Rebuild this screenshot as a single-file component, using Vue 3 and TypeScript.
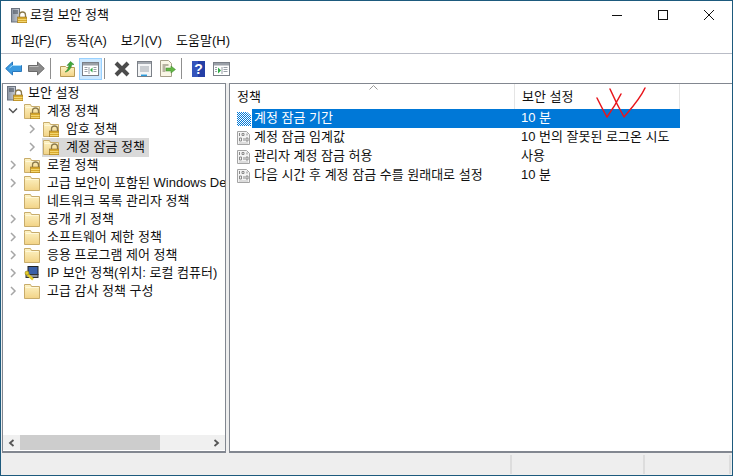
<script setup lang="ts">
interface TreeRow { label: string; indent: number; arrow: '' | 'open' | 'closed'; icon: string; selected?: boolean }
const menus = ['파일(F)', '동작(A)', '보기(V)', '도움말(H)']
const tree: TreeRow[] = [
  { label: '보안 설정', indent: 0, arrow: '', icon: 'server' },
  { label: '계정 정책', indent: 1, arrow: 'open', icon: 'lockfolder' },
  { label: '암호 정책', indent: 2, arrow: 'closed', icon: 'lockfolder' },
  { label: '계정 잠금 정책', indent: 2, arrow: 'closed', icon: 'lockfolder', selected: true },
  { label: '로컬 정책', indent: 1, arrow: 'closed', icon: 'lockfolder' },
  { label: '고급 보안이 포함된 Windows Defender 방화벽', indent: 1, arrow: 'closed', icon: 'folder' },
  { label: '네트워크 목록 관리자 정책', indent: 1, arrow: '', icon: 'folder' },
  { label: '공개 키 정책', indent: 1, arrow: 'closed', icon: 'folder' },
  { label: '소프트웨어 제한 정책', indent: 1, arrow: 'closed', icon: 'folder' },
  { label: '응용 프로그램 제어 정책', indent: 1, arrow: 'closed', icon: 'folder' },
  { label: 'IP 보안 정책(위치: 로컬 컴퓨터)', indent: 1, arrow: 'closed', icon: 'ipsec' },
  { label: '고급 감사 정책 구성', indent: 1, arrow: 'closed', icon: 'folder' },
]
const policies = [
  { name: '계정 잠금 기간', value: '10 분', selected: true },
  { name: '계정 잠금 임계값', value: '10 번의 잘못된 로그온 시도' },
  { name: '관리자 계정 잠금 허용', value: '사용' },
  { name: '다음 시간 후 계정 잠금 수를 원래대로 설정', value: '10 분' },
]
</script>

<template>
  <div class="window">
    <svg class="defs" width="0" height="0">
      <defs>
        <linearGradient id="fold" x1="0" y1="0" x2="0" y2="1">
          <stop offset="0" stop-color="#fdf3c6" />
          <stop offset="1" stop-color="#f2d386" />
        </linearGradient>
        <linearGradient id="tower" x1="0" y1="0" x2="1" y2="0">
          <stop offset="0" stop-color="#8d96a3" />
          <stop offset="1" stop-color="#c9ced6" />
        </linearGradient>
        <symbol id="folder" viewBox="0 0 16 16">
          <path d="M.5 3.500V1.500h6l1 2h8v12H.5z" fill="url(#fold)" stroke="#c8ac6b" />
          <path d="M1.500 4.500h13" stroke="#fff8d8" />
        </symbol>
        <symbol id="lock" viewBox="0 0 16 16">
          <path d="M8.500 10V8a3 3 0 0 1 6 0v2" fill="none" stroke="#8b7a4d" stroke-width="1.300" />
          <rect x="6.500" y="10" width="9.500" height="6" fill="#d8a92c" stroke="#94722a" stroke-width=".6" />
          <path d="M7 12.500h8.500M7 14.500h8.500" stroke="#f3d670" />
        </symbol>
        <symbol id="lockfolder" viewBox="0 0 16 16">
          <use href="#folder" width="16" height="16" />
          <use href="#lock" width="16" height="16" />
        </symbol>
        <symbol id="server" viewBox="0 0 16 16">
          <rect x=".5" y="1.500" width="8" height="13.500" fill="url(#tower)" stroke="#6d7480" />
          <path d="M2 4h5M2 6h5" stroke="#3f4752" />
          <use href="#lock" width="16" height="16" />
        </symbol>
        <symbol id="ipsec" viewBox="0 0 16 16">
          <rect x="4" y="1.500" width="10" height="8" fill="#3a5fa8" stroke="#222" />
          <rect x="2" y="9.500" width="12" height="3" fill="#8d929a" stroke="#333" />
          <path d="M2 8l7 6.500" stroke="#e4cc2a" stroke-width="2.400" />
          <circle cx="3" cy="8" r="2" fill="#e4cc2a" stroke="#7c6e12" stroke-width=".5" />
        </symbol>
        <symbol id="policy" viewBox="0 0 16 16">
          <path d="M1.500 1.500h9l3 3v10h-12z" fill="#f4f4f4" stroke="#a4a4a4" />
          <path d="M3.500 3v3M6 3.500h2v2H6zM3.500 8h2v3h-2zM8 8v3M10 8h2v3h-2zM11 3.500v2" fill="none" stroke="#8a8a8a" />
          <path d="M3 13h9" stroke="#c4c4c4" />
        </symbol>
        <pattern id="dither" width="2" height="2" patternUnits="userSpaceOnUse">
          <rect width="2" height="2" fill="#fff" />
          <rect width="1" height="1" fill="#0078d7" />
          <rect x="1" y="1" width="1" height="1" fill="#0078d7" />
        </pattern>
        <symbol id="policy-sel" viewBox="0 0 16 16">
          <path d="M1 1h10l4 3.500V15H1z" fill="url(#dither)" />
        </symbol>
      </defs>
    </svg>

    <header class="titlebar">
      <svg class="title-icon" width="16" height="16"><use href="#server" width="16" height="16" /></svg>
      <span class="title-text">로컬 보안 정책</span>
      <div class="caption">
        <span class="cap-btn"><i class="min"></i></span>
        <span class="cap-btn"><i class="max"></i></span>
        <span class="cap-btn">
          <svg width="10" height="10" viewBox="0 0 10 10"><path d="M0 0l10 10M10 0L0 10" stroke="#111" fill="none" /></svg>
        </span>
      </div>
    </header>

    <nav class="menubar">
      <span v-for="m in menus" :key="m" class="menu">{{ m }}</span>
    </nav>

    <div class="toolbar">
      <span class="tool">
        <svg width="17" height="15" viewBox="0 0 17 15"><path d="M.7 7.500L7.500 1v3.500h9v6h-9V14z" fill="#3a9ae0" stroke="#2a78bd" stroke-linejoin="round" /><path d="M4.500 7l3-2.500h8.500" stroke="#a5dcfa" fill="none" /></svg>
      </span>
      <span class="tool">
        <svg width="17" height="15" viewBox="0 0 17 15"><path d="M16.300 7.500L9.500 1v3.500h-9v6h9V14z" fill="#8c8c8c" stroke="#6a6a6a" stroke-linejoin="round" /><path d="M1.500 5.500h9" stroke="#bcbcbc" /></svg>
      </span>
      <i class="sep"></i>
      <span class="tool">
        <svg width="15" height="16" viewBox="0 0 15 16"><path d="M.5 5.500h5l1 1h8v9H.5z" fill="url(#fold)" stroke="#b89a55" /><path d="M5 11C7.500 9.500 8.500 6.500 9 4L7 4.500 10.500.5 14 3.500l-2.200.1C11.300 7 8.500 11 5 11z" fill="#3fa83a" stroke="#2a7c26" stroke-width=".5" /></svg>
      </span>
      <span class="tool active">
        <svg width="17" height="14" viewBox="0 0 17 14"><rect x=".5" y=".5" width="16" height="13" fill="#fff" stroke="#7a7f87" /><rect x="1" y="1" width="15" height="2.500" fill="#9aa0a8" /><path d="M2.500 5.500h3M2.500 7.500h3M2.500 9.500h3M11.500 5.500h3M11.500 7.500h3M11.500 9.500h3M7 5v7" stroke="#9aa0a8" /><path d="M10.500 5.500v5l-2.500-2.500z" fill="#2eaa44" /></svg>
      </span>
      <i class="sep"></i>
      <span class="tool">
        <svg width="16" height="16" viewBox="0 0 16 16"><path d="M2 2l12 12M14 2L2 14" stroke="#4c4c4c" stroke-width="4" /></svg>
      </span>
      <span class="tool">
        <svg width="15" height="16" viewBox="0 0 15 16"><rect x=".5" y=".5" width="14" height="15" fill="#f4f5f6" stroke="#7b8087" /><rect x="1" y="1" width="13" height="2" fill="#a4a9b0" /><path d="M3 6h9M3 8h9M3 10h9" stroke="#9fa5ac" /><path d="M4 14.300h6" stroke="#2b9bdc" stroke-width="1.500" /></svg>
      </span>
      <span class="tool">
        <svg width="17" height="17" viewBox="0 0 17 17"><path d="M1.500.5h8l3 3v13h-11z" fill="#faf6e6" stroke="#a7a08a" /><path d="M3.500 5h6M3.500 7h3M3.500 9h3M3.500 11h3" stroke="#77705c" /><path d="M7 8h5V6l4.500 3.500L12 13v-2H7z" fill="#63b544" stroke="#3f8a2c" stroke-width=".5" /></svg>
      </span>
      <i class="sep"></i>
      <span class="tool">
        <svg width="13" height="16" viewBox="0 0 13 16"><rect width="13" height="16" fill="#243fa6" /><rect width="6" height="16" fill="#3f62c9" opacity=".6" /><text x="6.500" y="13" text-anchor="middle" font-size="14" font-weight="700" font-family="Liberation Sans" fill="#fff">?</text></svg>
      </span>
      <span class="tool">
        <svg width="17" height="14" viewBox="0 0 17 14"><rect x=".5" y=".5" width="16" height="13" fill="#fff" stroke="#7a7f87" /><rect x="1" y="1" width="15" height="2.500" fill="#9aa0a8" /><path d="M2 5.500h2M2 7.500h2M2 9.500h2M10.500 5.500h4M10.500 7.500h4M10.500 9.500h4M9 5v7" stroke="#9aa0a8" /><path d="M5 5.500v6l3-3z" fill="#2eaa44" /></svg>
      </span>
    </div>

    <main class="panes">
      <section class="tree-pane">
        <div class="tree-scroll">
          <div v-for="r in tree" :key="r.label" class="tree-row" :class="'lvl' + r.indent">
            <span class="arrow">
              <svg v-if="r.arrow === 'open'" width="10" height="8" viewBox="0 0 10 8"><path d="M1 1.500l4 4 4-4" fill="none" stroke="#555" stroke-width="1.500" /></svg>
              <svg v-else-if="r.arrow === 'closed'" width="7" height="10" viewBox="0 0 7 10"><path d="M1 1l4 4-4 4" fill="none" stroke="#a6a6a6" stroke-width="1.500" /></svg>
            </span>
            <span class="tree-item" :class="{ sel: r.selected }">
              <svg class="row-icon" width="16" height="16"><use :href="'#' + r.icon" width="16" height="16" /></svg>
              <span class="tree-label">{{ r.label }}</span>
            </span>
          </div>
        </div>
        <div class="hscroll">
          <span class="sb-btn"><svg width="7" height="8" viewBox="0 0 7 8"><path d="M5.500 1L2 4l3.500 3" fill="none" stroke="#555" stroke-width="1.800" /></svg></span>
          <div class="sb-track"><div class="sb-thumb"></div></div>
          <span class="sb-btn"><svg width="7" height="8" viewBox="0 0 7 8"><path d="M1.500 1L5 4 1.500 7" fill="none" stroke="#555" stroke-width="1.800" /></svg></span>
        </div>
      </section>

      <section class="list-pane">
        <div class="list-head">
          <div class="col col-name">정책<svg class="sort" width="9" height="5" viewBox="0 0 9 5"><path d="M.5 4.500l4-4 4 4" fill="none" stroke="#999" /></svg></div>
          <div class="col col-val">보안 설정</div>
        </div>
        <div v-for="p in policies" :key="p.name" class="list-row">
          <svg class="row-icon" width="16" height="16"><use :href="p.selected ? '#policy-sel' : '#policy'" width="16" height="16" /></svg>
          <div class="list-cells" :class="{ sel: p.selected }">
            <span class="cell-name">{{ p.name }}</span>
            <span class="cell-val">{{ p.value }}</span>
          </div>
        </div>
        <svg class="scribble" width="60" height="40" viewBox="0 0 60 40"><path d="M5 14C8 20 12 28 15 33 20 26 25 18 29 10M18 5C22 14 28 26 32 33 38 26 48 15 53 4" fill="none" stroke="#e8161c" stroke-width="1.500" stroke-linecap="round" stroke-linejoin="round" /></svg>
      </section>
    </main>

    <footer class="status">
      <span class="st st1"></span><span class="st st2"></span><span class="st st3"></span>
    </footer>
  </div>
</template>

<style>
html, body { margin: 0; background: #fff; overflow: hidden; }
</style>

<style scoped>
.window {
  box-sizing: border-box;
  width: 733px;
  height: 476px;
  display: flex;
  flex-direction: column;
  border: 1px solid #1d5a7d;
  background: #fff;
  font: 13px "Liberation Sans", "Noto Sans CJK KR", sans-serif;
  color: #111;
  overflow: hidden;
}
.defs { position: absolute; }
.titlebar { height: 29px; box-sizing: border-box; padding-bottom: 1px; display: flex; align-items: center; flex: none; }
.title-icon { margin-left: 10px; }
.title-text { margin-left: 3px; line-height: 18px; }
.caption { margin-left: auto; display: flex; }
.cap-btn { width: 46px; height: 28px; display: flex; align-items: center; justify-content: center; }
.min { width: 10px; height: 1px; background: #111; }
.max { width: 8px; height: 8px; border: 1px solid #111; }
.menubar { height: 24px; box-sizing: border-box; flex: none; display: flex; align-items: center; padding: 0 0 1px 3px; border-bottom: 1px solid #b9bcc6; }
.menu { padding: 0 7px; line-height: 18px; }
.toolbar { height: 29px; flex: none; display: flex; align-items: center; padding-left: 1px; background: #fff; }
.tool { width: 23px; height: 22px; display: flex; align-items: center; justify-content: center; }
.active { background: #cce8ff; box-shadow: inset 0 0 0 1px #99d1ff; }
.sep { width: 1px; height: 21px; background: #8f8f8f; margin: 0 5px 0 2px; }
.panes { flex: 1; min-height: 0; display: flex; background: #eee; }
.tree-pane { box-sizing: border-box; width: 224px; margin-left: 1px; border: 1px solid #828790; border-bottom-width: 2px; background: #fff; display: flex; flex-direction: column; }
.tree-scroll { flex: 1; min-height: 0; overflow: hidden; }
.tree-row { height: 18px; display: flex; align-items: center; white-space: nowrap; }
.lvl0, .lvl1 { padding-left: 3px; }
.lvl2 { padding-left: 22px; }
.lvl0 .arrow { display: none; }
.arrow { width: 14px; margin-right: 3px; flex: none; display: flex; justify-content: center; }
.row-icon { flex: none; }
.tree-item { display: flex; align-items: center; height: 18px; padding: 0 4px 0 1px; }
.tree-item.sel { background: #d9d9d9; box-shadow: 0 1px 0 #d9d9d9; }
.tree-label { margin-left: 7px; line-height: 18px; }
.lvl0 .tree-label { margin-left: 5px; }
.hscroll { height: 15px; margin: 0 0 1px; background: #f0f0f0; display: flex; flex: none; }
.sb-btn { width: 17px; display: flex; align-items: center; justify-content: center; flex: none; }
.sb-track { flex: 1; }
.sb-thumb { width: 140px; height: 100%; background: #cdcdcd; }
.list-pane { flex: 1; margin-left: 3px; border: 1px solid #828790; border-right: 0; border-bottom-width: 2px; background: #fff; position: relative; }
.list-head { height: 25px; display: flex; }
.col { height: 25px; box-sizing: border-box; padding-left: 7px; line-height: 25px; border-right: 1px solid #e5e5e5; position: relative; }
.col-name { width: 285px; }
.col-val { width: 165px; }
.sort { position: absolute; left: 139px; top: 1px; }
.scribble { position: absolute; left: 362px; top: 0; }
.list-row { height: 19px; display: flex; align-items: center; padding-left: 6px; }
.list-cells { display: flex; box-sizing: border-box; height: 19px; padding-bottom: 2px; line-height: 17px; align-items: center; width: 428px; }
.list-cells.sel { background: #0078d7; color: #fff; }
.cell-name { width: 269px; box-sizing: border-box; flex: none; padding-left: 2px; }
.cell-val { white-space: nowrap; }
.status { height: 22px; flex: none; background: #eee; display: flex; padding: 2px 0 1px; box-sizing: border-box; }
.st { display: block; box-sizing: border-box; border-right: 2px solid #ddd; }
.st1 { width: 511px; }
.st2 { width: 133px; }
.st3 { width: 86px; }
</style>
